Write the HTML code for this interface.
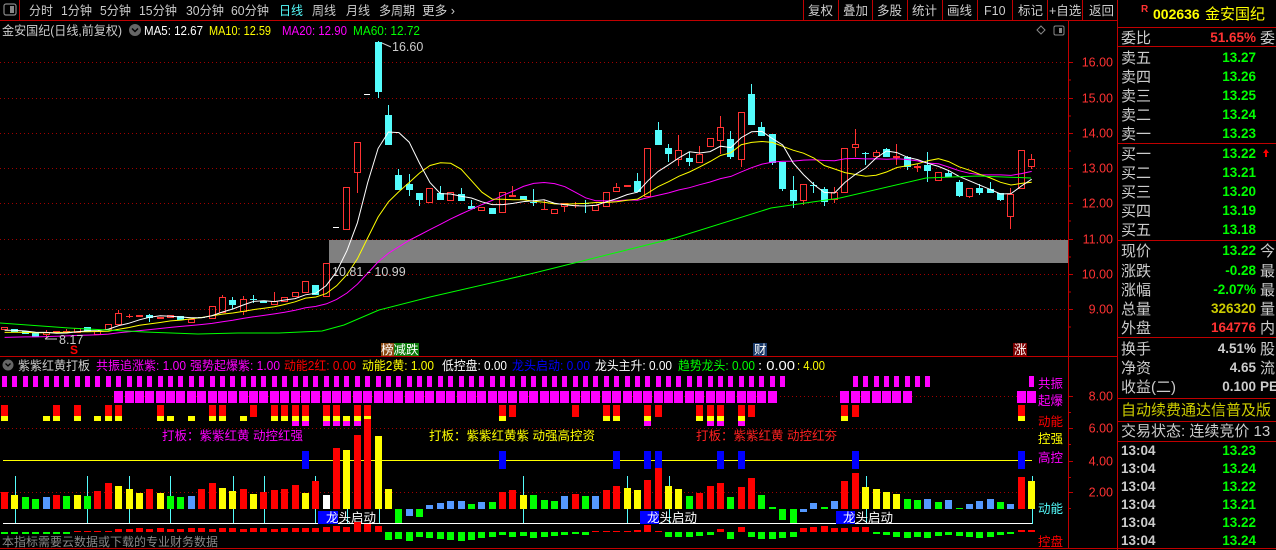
<!DOCTYPE html>
<html><head><meta charset="utf-8">
<style>
html,body{margin:0;padding:0;background:#000;width:1276px;height:550px;overflow:hidden}
svg{display:block}
text{font-family:"Liberation Sans","Noto Sans CJK SC",sans-serif}
</style></head><body>
<svg id="s" width="1276" height="550" xmlns="http://www.w3.org/2000/svg">
<rect width="1276" height="550" fill="#000"/>
<g id="g"></g>
</svg>
<script>
var out=[];
function R(x,y,w,h,f,extra){out.push('<rect x="'+x+'" y="'+y+'" width="'+w+'" height="'+h+'" fill="'+f+'" '+(extra||'')+'/>');}
function L(x1,y1,x2,y2,c,extra){out.push('<line x1="'+x1+'" y1="'+y1+'" x2="'+x2+'" y2="'+y2+'" stroke="'+c+'" stroke-width="1" '+(extra||'')+'/>');}
function T(x,y,s,c,sz,anchor,extra){out.push('<text x="'+x+'" y="'+y+'" fill="'+c+'" font-size="'+(sz||12)+'" '+(anchor?'text-anchor="'+anchor+'" ':'')+(extra||'')+'>'+s+'</text>');}
function TW(x,y,s,c,sz,w){T(x,y,s,c,sz,null,'textLength="'+w+'" lengthAdjust="spacingAndGlyphs"');}
function P(pts,c){out.push('<polyline fill="none" stroke="'+c+'" stroke-width="1" points="'+pts.map(function(p){return p[0].toFixed(1)+','+p[1].toFixed(1)}).join(' ')+'"/>');}
var RED='#ff3232',CY='#54fcfc';
// frame
L(0,20.5,1117,20.5,'#c00000');
L(19.5,0,19.5,20,'#c00000');
L(0,356.5,1117,356.5,'#c00000');
L(0,548.5,1276,548.5,'#c00000');
L(1068.5,20,1068.5,548,'#c00000');
L(1117.5,0,1117.5,550,'#c00000');
// toolbar
R(4,4,12,11,'none','stroke="#888" stroke-width="1.2" rx="2"');R(10,6,4,7,'#888');
var tb=[['分时',29,24],['1分钟',61,31],['5分钟',100,31],['15分钟',139,38],['30分钟',186,38],['60分钟',231,38],['日线',279,24,CY],['周线',312,24],['月线',346,24],['多周期',379,36],['更多 ›',422,33]];
tb.forEach(function(t){TW(t[1],15,t[0],t[3]||'#ccc',12.5,t[2]);});
var rb=[['复权',808],['叠加',843],['多股',877],['统计',912],['画线',947],['F10',984],['标记',1018],['+自选',1049],['返回',1089]];
rb.forEach(function(t){T(t[1],15,t[0],'#ccc',12.5);});
[803,838,872,907,942,977,1012,1047,1082].forEach(function(x){L(x+.5,0,x+.5,20,'#c00000');});
// header
TW(2,35,'金安国纪(日线,前复权)','#ccc',12.5,120);
out.push('<circle cx="135" cy="30" r="6" fill="#666"/><path d="M132 28.5l3 3 3-3" stroke="#000" fill="none" stroke-width="1.5"/>');
TW(144,35,'MA5: 12.67','#fff',12.5,59);TW(209,35,'MA10: 12.59','#ff0',12.5,62);TW(282,35,'MA20: 12.90','#f0f',12.5,65);TW(353,35,'MA60: 12.72','#0f0',12.5,67);
out.push('<path d="M1041 26l4 4-4 4-4-4z" stroke="#888" fill="none"/>');R(1054,26,10,9,'none','stroke="#888" rx="1.5"');R(1059,28,3,5,'#888');
// grid
[62,98,133,168,203,239,274,309].forEach(function(y,i){L(0,y+.5,1068,y+.5,'#a00000','stroke-dasharray="1 3"');T(1113,y+4.5,(16-i).toFixed(2),'#ff3232',12.5,'end');L(1068,y+.5,1073,y+.5,'#c00000');L(1068,y+18,1071,y+18,'#c00000');});
R(329,240,739,23,'#808080');
var D=[['r',327,330],['c',329,332],['c',331,334],['c',333,337],['r',332,335,330,338],['r',331,333],['r',331,331,329,333],['r',328,333],['c',327,332],['r',331,335],['r',324,330],['r',313,325,310,325],['r',316,316,314,318],['r',315,317],['c',315,318,314,322],['r',317,319],['r',315,318],['c',316,320],['r',319,323],['c',317,318],['r',306,319],['r',297,313,295,313],['c',300,305,297,309],['r',299,312,296,315],['c',299,300,295,303],['c',301,303],['r',301,305,292,305],['r',297,302],['r',292,297],['r',281,293],['c',285,295],['r',263,297],['d',227,227],['r',187,230],['r',142,173,142,193],['d',94,94],['c',42,92,41,98],['c',115,145,105,145],['c',175,190,169,190],['c',184,190,174,196],['c',193,200,193,206],['r',188,203],['c',193,200,186,200],['r',192,201],['c',194,201,188,201],['c',206,209,200,209],['r',207,211],['c',208,214],['r',192,213],['r',195,197,186,197],['c',196,200],
['c',202,203,189,206],['r',209,209,200,210],['r',209,214],['r',203,207,203,212],['r',205,205,202,208],['c',203,204,200,213],['r',205,211],['r',192,207],['r',187,192,183,192],['r',185,187],['c',181,192,173,192],['r',148,197],['c',130,145,122,145],['c',148,154,144,162],['r',150,160,135,166],['c',158,162,152,166],['r',154,163,146,163],['r',138,147],['r',127,141,116,154],['c',139,157,131,159],['r',112,160,112,167],['c',94,125,84,125],['c',127,136,122,136],['c',134,163,134,165],['c',162,189,162,191],['c',190,201,176,208],['r',184,201,184,205],['c',185,186,182,193],['c',189,202,187,206],['r',192,200,187,203],['r',148,193],['r',144,148,129,157],['c',153,154,152,165],['r',152,157,150,157],['c',149,157,148,157],['r',156,158,144,165],['c',157,167,156,170],['r',166,168,164,172],['c',165,171,152,182],['r',172,181],['c',173,177,170,177],['c',182,196,180,197],['r',188,197,188,198],['c',188,193,184,195],['c',189,193,182,193],['c',193,200,193,201],['r',194,217,188,229],['r',150,189],['r',159,167,154,169]];
function X(i){return 4.1+10.375*i;}
var closes=[];
D.forEach(function(d,i){
  var x=Math.round(X(i)),t=d[1],b=d[2],h=d[3]!=null?d[3]:t,l=d[4]!=null?d[4]:b;
  var c=d[0]=='c'?CY:(d[0]=='r'?RED:'#fff');
  closes.push(d[0]=='c'?b:t);
  if(d[0]=='d'){L(x-3,t+.5,x+3,t+.5,'#fff');return;}
  if(h<t)L(x+.5,h,x+.5,t,c);
  if(l>b)L(x+.5,b,x+.5,l,c);
  if(b-t<1){L(x-3,t+.5,x+4,t+.5,c);}
  else if(d[0]=='c')R(x-3,t,7,b-t,c);
  else R(x-2.5,t+.5,6,b-t-1,'none','stroke="'+c+'"');
});
function MA(n,pad){var pts=[];for(var i=0;i<closes.length;i++){var s=0;for(var k=i-n+1;k<=i;k++)s+=(k<0?pad:closes[k]);pts.push([X(i)+.5,s/n]);}return pts;}
P(MA(20,338),'#ff00ff');P(MA(10,333),'#ffff00');P(MA(5,331),'#ffffff');
P([[0,323],[69,328],[145,332],[198,334],[238,333],[279,333],[322,331],[344,325],[379,310],[430,297],[530,274],[675,238],[771,208],[840,198],[926,178],[978,176],[1031,178]],'#00ff00');
T(392,51,'16.60','#ccc',12.5);L(382,43,391,47,'#ccc');
T(59,344,'8.17','#ccc',12.5);L(45,339,57,339,'#ccc');L(45,339,49,336,'#ccc');
T(332,276,'10.81 - 10.99','#ccc',12.5);
T(70,354,'S','#ff0000',12,null,'font-weight="bold"');
R(381,343,13,13,'#8b4a14');R(394,343,25,13,'#0a7a0a');T(381,354,'榜减跌','#fff',12.5);
R(753,343,14,13,'#1a3a6a');T(754,354,'财','#fff',12.5);
R(1013,343,14,13,'#7a0000');T(1014,354,'涨','#fff',12.5);
out.push('<circle cx="8" cy="365" r="5.5" fill="#666"/><path d="M5.5 363.5l2.5 2.5 2.5-2.5" stroke="#000" fill="none" stroke-width="1.3"/>');
var it=[['紫紫红黄打板',18,'#ccc',72],['共振追涨紫: 1.00',96,'#f0f',90],['强势起爆紫: 1.00',190,'#f0f',90],['动能2红: 0.00',284,'#f00',72],['动能2黄: 1.00',362,'#ff0',72],['低控盘: 0.00',442,'#fff',65],['龙头启动: 0.00',512,'#00f',78],['龙头主升: 0.00',595,'#fff',77],['趋势龙头: 0.00',678,'#0f0',77],[': 0.00',758,'#fff',37],[': 4.00',797,'#ff0',28]];
it.forEach(function(t){TW(t[1],370,t[0],t[2],12.5,t[3]);});
[[396,'8.00'],[428,'6.00'],[461,'4.00'],[492,'2.00']].forEach(function(a){T(1113,a[0]+4.5,a[1],'#ff3232',12.5,'end');L(1068,a[0]+.5,1073,a[0]+.5,'#c00000');L(1068,a[0]+16.5,1071,a[0]+16.5,'#c00000');});
[396,428,492].forEach(function(y){L(0,y+.5,1035,y+.5,'#a00000','stroke-dasharray="1 3"');});
L(3,460.5,1032,460.5,'#ffff00');
var rl=[['共振',383,'#f0f'],['起爆',400,'#f0f'],['动能',421,'#f00'],['控强',438,'#ff0'],['高控',457,'#f0f'],['动能',508,CY],['控盘',541,'#f00']];
rl.forEach(function(t){T(1038,t[1]+5,t[0],t[2],12.5);});
for(var i=0;i<100;i++){var x=Math.round(X(i));
 if(i<=75||(i>=82&&i<=89)||i==99)R(x-2,376,5,11,'#ff00ff');
 if((i>=11&&i<=74)||(i>=81&&i<=87)||i>=98)R(x-4,391,9,12,'#ff00ff');}
var r3={0:'ry',4:'y',5:'ry',7:'ry',9:'y',10:'ry',11:'ry',15:'ry',16:'y',18:'y',20:'ry',21:'ry',23:'y',24:'r',26:'ry',27:'ry',28:'rym',29:'rym',31:'rym',32:'rym',33:'ym',34:'rym',35:'ry',48:'ry',49:'r',55:'r',58:'ry',59:'ry',62:'rym',63:'r',67:'ry',68:'rym',69:'rym',71:'rym',72:'r',81:'ry',82:'r',98:'ry'};
for(var k in r3){var x=Math.round(X(+k)),s=r3[k];
 if(s.indexOf('r')>=0)R(x-3,405,7,12,'#ff0000');
 if(s.indexOf('y')>=0)R(x-3,416,7,5,'#ffff00');
 if(s.indexOf('m')>=0)R(x-3,421,7,5,'#ff00ff');}
[29,48,59,62,63,69,71,82,98].forEach(function(i){R(Math.round(X(i))-3,451,7,18,'#0000ff');});
T(162,440,'打板：紫紫红黄 动控红强','#ff00ff',12.5);
T(429,440,'打板：紫紫红黄紫 动强高控资','#ffff00',12.5);
T(696,440,'打板：紫紫红黄 动控红夯','#ff2020',12.5);
var H='r492 y495 g497 g499 b497 r495 g496 y495 g496 r491 r483 y486 y489 y493 r489 y493 g496 g497 b496 r489 r483 y488 y491 r489 y494 r492 r490 r489 r485 y493 r481 w495 r448 y450 r435 r419 y436 y489 g523 b516 g517 b505 b503 b501 b501 g504 b502 g502 r492 r490 y495 g495 g500 g501 b496 r494 g496 b496 r490 r486 y488 y490 r480 r468 y486 y489 g496 r493 r486 r483 g497 r487 r478 g495 g507 g520 g523 b512 b503 g507 b501 r481 r473 y487 y489 y492 y494 g499 g500 b499 g502 b500 g508 b504 b501 b499 g502 b504 r477 y481'.split(' ');
var HC={r:'#ff0000',y:'#ffff00',g:'#00ff00',b:'#5599ff',w:'#ffffff'};
[15,87,129,170,233,264,315,347,379,523,627,669,866,1032].forEach(function(x){L(x+.5,476,x+.5,524,CY);});
H.forEach(function(h,i){var c=HC[h[0]],y=+h.slice(1),x=Math.round(X(i))-3;
 if(y<509)R(x,y,7,509-y,c);else R(x,509,7,y-509,c);});
L(3,523.5,1032,523.5,'#ffffff');
[[318,326],[640,647],[836,843]].forEach(function(a){R(a[0],511,a[1]-a[0]+12,13,'#0000ff');T(a[1],522,'龙头启动','#fff',12.5);});
var K=[-2,-2,-2,-2,-2,-2,-2,1,1,1,1,3,3,4,3,4,3,3,4,4,3,4,4,3,4,4,3,4,4,4,4,5,6,5,10,8,6,-8,-7,-9,-5,-6,-7,-8,-9,-8,-6,-5,-3,-5,-4,-6,-5,-4,-3,-2,-3,1,1,1,1,2,7,1,-5,-5,-5,-4,-3,3,-7,5,-5,-7,-7,-6,-5,4,5,6,4,4,5,5,-2,-3,-5,-6,-5,-6,-4,-3,-4,-5,-6,-5,-3,-2,2,2];
K.forEach(function(v,i){var x=Math.round(X(i))-3;if(v>0)R(x,532-v,7,v,'#ff0000');else R(x,532,7,-v,'#00ff00');});
T(2,546,'本指标需要云数据或下载的专业财务数据','#888',12);
T(1141,12,'R','#ff3232',10,null,'font-weight="bold"');
T(1153,19,'002636','#ffff00',14,null,'font-weight="bold"');
T(1205,19,'金安国纪','#ffff00',15);
[27,46,143,240,337,398,421,441].forEach(function(y){L(1117,y+.5,1276,y+.5,'#c00000');});
function row(y,lab,val,vc,suf){T(1121,y+6,lab,'#ccc',15);if(val)T(1256,y+5,val,vc,13.5,'end','font-weight="bold"');if(suf)T(1260,y+6,suf,'#ccc',15);}
row(37,'委比','51.65%','#ff3232','委');
['卖五','卖四','卖三','卖二','卖一'].forEach(function(l,i){row(57+i*19,l,['13.27','13.26','13.25','13.24','13.23'][i],'#00ff00');});
['买一','买二','买三','买四','买五'].forEach(function(l,i){row(153+i*19,l,['13.22','13.21','13.20','13.19','13.18'][i],'#00ff00');});
out.push('<path d="M1263 153l3-4 3 4h-2v4h-2v-4z" fill="#ff0000"/>');
row(250,'现价','13.22','#00ff00','今');
row(270,'涨跌','-0.28','#00ff00','最');
row(289,'涨幅','-2.07%','#00ff00','最');
row(308,'总量','326320','#cccc00','量');
row(327,'外盘','164776','#ff3232','内');
row(348,'换手','4.51%','#ccc','股');
row(367,'净资','4.65','#ccc','流');
row(386,'收益(二)','0.100','#ccc');T(1260,391,'PE','#ccc',13.5,null,'font-weight="bold"');
T(1121,415,'自动续费通达信普及版','#cccc00',15);
T(1121,436,'交易状态: 连续竞价 13','#ccc',15);
['13.23','13.24','13.22','13.21','13.22','13.24'].forEach(function(p,i){var y=450+i*18;T(1121,y+5,'13:04','#ccc',13.5,null,'font-weight="bold"');T(1256,y+5,p,'#00ff00',13.5,'end','font-weight="bold"');});
document.getElementById('g').innerHTML=out.join('');
</script>
</body></html>
